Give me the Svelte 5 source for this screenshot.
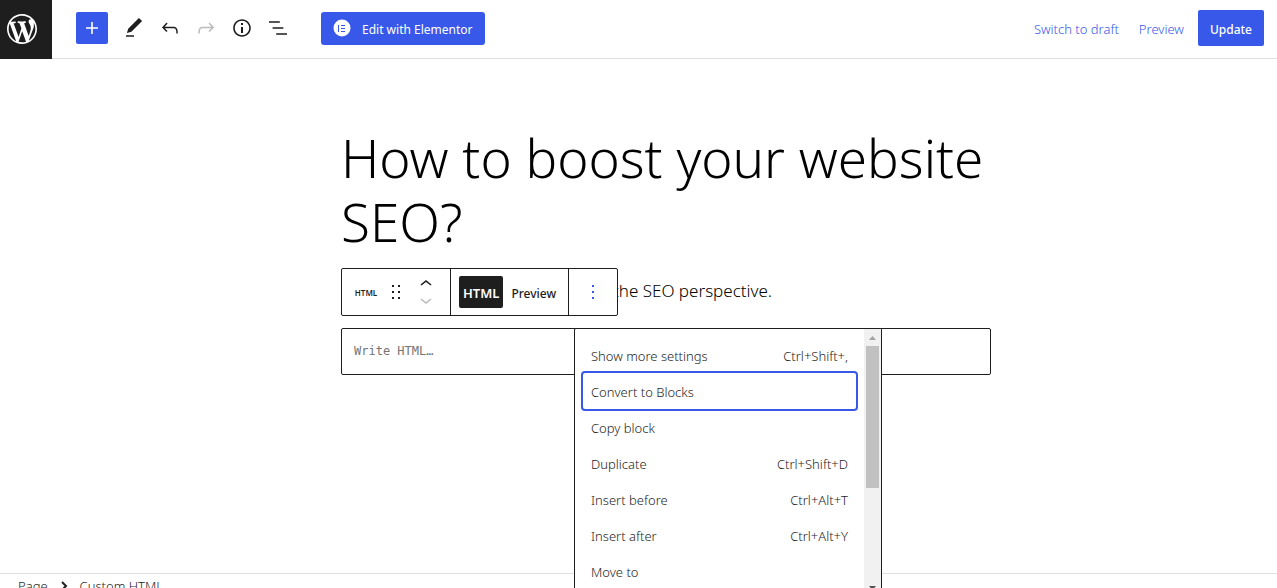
<script>
  const icons = {
    wordpress: 'M20 10c0-5.51-4.49-10-10-10C4.48 0 0 4.49 0 10c0 5.52 4.48 10 10 10 5.51 0 10-4.48 10-10zM7.78 15.37L4.37 6.22c.55-.02 1.17-.08 1.17-.08.5-.06.44-1.13-.06-1.11 0 0-1.45.11-2.37.11-.18 0-.37 0-.58-.01C4.12 2.69 6.87 1.11 10 1.11c2.33 0 4.45.87 6.05 2.34-.68-.11-1.65.39-1.65 1.58 0 .74.45 1.36.9 2.1.35.61.55 1.36.55 2.46 0 1.49-1.4 5-1.4 5l-3.03-8.37c.54-.02.82-.17.82-.17.5-.05.44-1.25-.06-1.22 0 0-1.44.12-2.38.12-.87 0-2.33-.12-2.33-.12-.5-.03-.56 1.2-.06 1.22l.92.08 1.26 3.41zM17.41 10c.24-.64.74-1.87.43-4.25.7 1.29 1.05 2.71 1.05 4.25 0 3.29-1.73 6.24-4.4 7.78.97-2.59 1.94-5.2 2.92-7.78zM6.1 18.09C3.12 16.65 1.11 13.53 1.11 10c0-1.3.23-2.48.72-3.59C3.25 10.3 4.67 14.2 6.1 18.09zm4.03-6.63l2.58 6.98c-.86.29-1.76.45-2.71.45-.79 0-1.57-.11-2.29-.33.81-2.38 1.62-4.74 2.42-7.1z',
    plus: 'M18 11.2h-5.2V6h-1.6v5.2H6v1.6h5.2V18h1.6v-5.2H18z',
    drag: 'M8 7h2V5H8v2zm0 6h2v-2H8v2zm0 6h2v-2H8v2zm6-14v2h2V5h-2zm0 8h2v-2h-2v2zm0 6h2v-2h-2v2z',
    up: 'M6.5 12.4L12 8l5.5 4.4-.9 1.2L12 10l-4.5 3.6-1-1.2z',
    down: 'M17.5 11.6L12 16l-5.5-4.4.9-1.2L12 14l4.5-3.6 1 1.2z',
    more: 'M13 19h-2v-2h2v2zm0-6h-2v-2h2v2zm0-6h-2V5h2v2z'
  };

  const tools = [
    { label: 'Tools', path: 'M20.1 5.1L16.9 2 6.2 12.7l-1.3 4.4 4.5-1.3L20.1 5.1zM4 20.8h8v-1.5H4v1.5z' },
    { label: 'Undo', path: 'M18.3 11.7c-.6-.6-1.4-.9-2.3-.9H6.7l2.9-3.3-1.1-1-4.5 5L8.5 16l1-1-2.7-2.7H16c.5 0 .9.2 1.3.5 1 1 1 3.4 1 4.5v.3h1.5v-.2c0-1.5 0-4.3-1.5-5.7z' },
    { label: 'Redo', disabled: true, path: 'M15.6 6.5l-1.1 1 2.9 3.3H8c-.9 0-1.7.3-2.3.9-1.4 1.5-1.4 4.2-1.4 5.6v.2h1.5v-.3c0-1.1 0-3.5 1-4.5.3-.3.7-.5 1.3-.5h9.2L14.5 15l1.1 1.1 4.6-4.6-4.6-5z' },
    { label: 'Details', path: 'M12 3.2c-4.8 0-8.8 3.9-8.8 8.8 0 4.8 3.9 8.8 8.8 8.8 4.8 0 8.8-3.9 8.8-8.8 0-4.8-4-8.8-8.8-8.8zm0 16c-4 0-7.2-3.3-7.2-7.2C4.8 8 8 4.8 12 4.8s7.2 3.3 7.2 7.2c0 4-3.2 7.2-7.2 7.2zM11 17h2v-6h-2v6zm0-8h2V7h-2v2z' },
    { label: 'List View', path: 'M13.8 5.2H3v1.5h10.8V5.2zm-3.6 12v1.5H21v-1.5H10.2zm7.2-6H6.6v1.5h10.8v-1.5z' }
  ];

  const menuItems = [
    { label: 'Show more settings', shortcut: 'Ctrl+Shift+,' },
    { label: 'Convert to Blocks' },
    { label: 'Copy block' },
    { label: 'Duplicate', shortcut: 'Ctrl+Shift+D' },
    { label: 'Insert before', shortcut: 'Ctrl+Alt+T' },
    { label: 'Insert after', shortcut: 'Ctrl+Alt+Y' },
    { label: 'Move to' }
  ];

  let active = $state('Convert to Blocks');
  let mode = $state('html');
  let menuOpen = $state(true);
  let html = $state('');
</script>

{#snippet icon(path, size = 24)}
  <svg width={size} height={size} viewBox="0 0 24 24" aria-hidden="true"><path d={path} /></svg>
{/snippet}

<div class="editor">
  <header>
    <a class="home" href="#dashboard" aria-label="View Pages">
      <svg width="30" height="30" viewBox="0 0 20 20" aria-hidden="true"><path d={icons.wordpress} /></svg>
    </a>
    <div class="tools">
      <button class="inserter" aria-label="Toggle block inserter">{@render icon(icons.plus)}</button>
      {#each tools as tool}
        <button class="tool" aria-label={tool.label} disabled={tool.disabled}>{@render icon(tool.path)}</button>
      {/each}
    </div>
    <button class="elementor">
      <svg width="18" height="18" viewBox="0 0 18 18" aria-hidden="true">
        <circle cx="9" cy="9" r="8.5" fill="#fff" />
        <path d="M5 6h1v7H5zM8 6h4v1H8zM8 9h4v1H8zM8 12h4v1H8z" fill="#3858e9" />
      </svg>
      <span>Edit with Elementor</span>
    </button>
    <div class="settings">
      <button class="link">Switch to draft</button>
      <button class="link">Preview</button>
      <button class="update">Update</button>
    </div>
  </header>

  <main>
    <div class="column">
      <h1>How to boost your website SEO?</h1>
      <div class="paragraph">
        <p>the SEO perspective.</p>
        <div class="toolbar" role="toolbar" aria-label="Block tools">
          <div class="group movers">
            <button class="type" aria-label="Custom HTML">HTML</button>
            <button class="drag" aria-label="Drag">{@render icon(icons.drag)}</button>
            <div class="arrows">
              <button aria-label="Move up">{@render icon(icons.up)}</button>
              <button aria-label="Move down" disabled>{@render icon(icons.down)}</button>
            </div>
          </div>
          <div class="group modes">
            <button class:pressed={mode === 'html'} onclick={() => (mode = 'html')}>HTML</button>
            <button class:pressed={mode === 'preview'} onclick={() => (mode = 'preview')}>Preview</button>
          </div>
          <div class="group">
            <button class="more" aria-label="Options" onclick={() => (menuOpen = !menuOpen)}>
              {@render icon(icons.more)}
            </button>
          </div>
        </div>
        {#if menuOpen}
          <div class="menu">
            <div class="items" role="menu">
              {#each menuItems as item}
                <button role="menuitem" class:active={active === item.label} onclick={() => (active = item.label)}>
                  <span>{item.label}</span>
                  {#if item.shortcut}<span>{item.shortcut}</span>{/if}
                </button>
              {/each}
            </div>
            <div class="scrollbar">
              <svg width="17" height="17" viewBox="0 0 17 17" aria-hidden="true"><path d="M5 11h7L8.500 7z" fill="#a3a3a3" /></svg>
              <div class="thumb"></div>
              <svg width="17" height="17" viewBox="0 0 17 17" aria-hidden="true"><path d="M5 6h7L8.500 10z" fill="#505050" /></svg>
            </div>
          </div>
        {/if}
      </div>
      <div class="html-block">
        <textarea rows="1" aria-label="HTML" placeholder="Write HTML…" bind:value={html}></textarea>
      </div>
    </div>
  </main>

  <footer>
    <nav aria-label="Block breadcrumb">
      <button>Page</button>
      <svg width="8" height="10" viewBox="0 0 8 10" aria-hidden="true"><path d="M2 1l4 4-4 4" fill="none" stroke="#1e1e1e" stroke-width="2" /></svg>
      <span>Custom HTML</span>
    </nav>
  </footer>
</div>

<style>
  :global(body) {
    margin: 0;
    background: #fff;
  }

  .editor {
    display: flex;
    flex-direction: column;
    height: 100vh;
    overflow: hidden;
    font-family: 'Noto Sans', 'Open Sans', sans-serif;
    font-size: 13px;
    font-weight: 350;
    color: #1e1e1e;
  }

  .editor * {
    box-sizing: border-box;
  }

  button {
    display: flex;
    align-items: center;
    justify-content: center;
    padding: 0;
    border: 0;
    border-radius: 2px;
    background: none;
    color: inherit;
    font: inherit;
    white-space: nowrap;
    cursor: pointer;
  }

  svg {
    display: block;
    flex: none;
    fill: currentColor;
  }

  header {
    display: flex;
    flex: none;
    align-items: center;
    padding: 0 13px 2px 0;
    height: 59px;
    border-bottom: 1px solid #e0e0e0;
  }

  .home {
    display: flex;
    align-items: center;
    justify-content: center;
    align-self: flex-start;
    width: 52px;
    height: 59px;
    padding: 0 8px 1px 0;
    background: #1e1e1e;
    color: #fff;
  }

  .tools {
    display: flex;
    align-items: center;
    margin-left: 24px;
  }

  .inserter {
    width: 32px;
    height: 32px;
    margin-right: 8px;
    background: #3858e9;
    color: #fff;
  }

  .tool {
    width: 36px;
    height: 36px;
  }

  button:disabled {
    color: #bbb;
    cursor: default;
  }

  .elementor {
    gap: 11px;
    height: 33px;
    margin-left: 25px;
    padding: 0 12px;
    border-radius: 3px;
    background: #3858e9;
    color: #fff;
    font-size: 12px;
    font-weight: 400;
  }

  .elementor span {
    padding-top: 2px;
  }

  .settings {
    display: flex;
    align-items: center;
    margin-left: auto;
  }

  .link {
    margin-right: 20px;
    padding-top: 2px;
    color: #3858e9;
  }

  .link + .update {
    margin-left: -6px;
  }

  .update {
    height: 36px;
    padding: 2px 12px 0;
    background: #3858e9;
    color: #fff;
    font-size: 12px;
    font-weight: 500;
  }

  main {
    flex: 1;
    min-height: 0;
    padding: 67px 0 0 55px;
  }

  .column {
    max-width: 650px;
    margin: 0 auto;
  }

  h1 {
    margin: 0;
    color: #000;
    font-size: 53px;
    font-weight: 350;
    line-height: 64px;
  }

  .paragraph {
    position: relative;
    margin-top: 14px;
    height: 60px;
  }

  p {
    margin: 0;
    padding-left: 272px;
    color: #000;
    font-size: 17px;
    line-height: 46px;
  }

  .toolbar {
    position: absolute;
    top: 0;
    left: 0;
    display: flex;
    height: 48px;
    border: 1px solid #1e1e1e;
    border-radius: 2px;
    background: #fff;
  }

  .group {
    display: flex;
    align-items: center;
    border-right: 1px solid #1e1e1e;
  }

  .group:last-child {
    border-right: 0;
  }

  .movers {
    padding-right: 12px;
  }

  .type {
    width: 48px;
    font-size: 8px;
    font-weight: 600;
  }

  .drag {
    width: 12px;
  }

  .arrows {
    margin-left: 12px;
  }

  .arrows button {
    width: 24px;
    height: 16px;
  }

  .modes {
    padding: 0 8px;
  }

  .modes button {
    height: 32px;
    padding: 2px 4px 0;
    font-size: 12px;
    font-weight: 500;
  }

  .modes button + button {
    margin-left: 4px;
  }

  .modes .pressed {
    background: #1e1e1e;
    color: #fff;
    font-size: 13px;
    font-weight: 600;
  }

  .more {
    width: 48px;
    height: 46px;
    color: #3858e9;
  }

  .menu {
    position: absolute;
    top: 60px;
    left: 233px;
    z-index: 1;
    display: flex;
    width: 308px;
    border: 1px solid #1e1e1e;
    border-radius: 2px;
    background: #fff;
  }

  .items {
    flex: 1;
    padding: 8px;
  }

  .items button {
    justify-content: space-between;
    width: 100%;
    height: 36px;
    padding: 2px 8px 0;
  }

  .items .active {
    outline: 2px solid #3858e9;
  }

  .scrollbar {
    display: flex;
    flex-direction: column;
    width: 17px;
    background: #f1f1f1;
  }

  .thumb {
    height: 142px;
    margin: 0 2px auto;
    background: #c1c1c1;
  }

  .html-block {
    padding: 12px;
    border: 1px solid #1e1e1e;
    border-radius: 2px;
  }

  textarea {
    display: block;
    width: 100%;
    height: 21px;
    padding: 0;
    border: 0;
    outline: 0;
    background: none;
    font-family: 'DejaVu Sans Mono', monospace;
    font-size: 11px;
    line-height: 21px;
    overflow: hidden;
    resize: none;
  }

  textarea::placeholder {
    color: #757575;
    font-size: 12px;
    opacity: 1;
  }

  footer {
    flex: none;
    height: 15px;
    padding-left: 18px;
    border-top: 1px solid #e0e0e0;
  }

  nav {
    display: flex;
    align-items: center;
    gap: 12px;
    height: 24px;
  }
</style>
